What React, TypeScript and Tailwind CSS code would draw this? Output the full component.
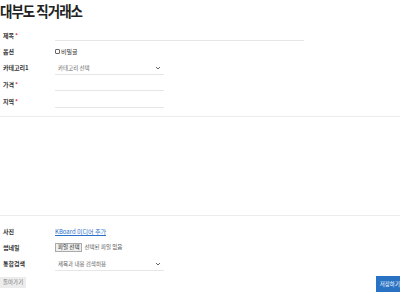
import React from 'react';

const font = { fontFamily: '"Noto Sans CJK KR", "Noto Sans", sans-serif' };

function Label({ text, required }: { text: string; required?: boolean }) {
  return (
    <div className="w-[55px] shrink-0 pl-[3px] text-[6px] font-semibold text-[#333]">
      {text}
      {required && <span className="ml-[1px] text-[#e53935]">*</span>}
    </div>
  );
}

function Chevron() {
  return (
    <svg width="6" height="4" viewBox="0 0 6 4" className="absolute right-[3px] top-[3px]">
      <path d="M1 1l2 2 2-2" fill="none" stroke="#555" strokeWidth="0.9" />
    </svg>
  );
}

export default function App() {
  return (
    <div className="relative h-[300px] w-[400px] overflow-hidden bg-white" style={font}>
      <h1 className="origin-left scale-y-[1.12] text-[13.5px] font-bold leading-[21px] tracking-[-1px] text-[#222]">
        대부도 직거래소
      </h1>

      {/* 기본 입력 */}
      <div className="mt-[6px] flex h-[16px] items-center">
        <Label text="제목" required />
        <div className="mt-[5px] h-[7px] w-[249px] border-b border-[#e6e6e6]" />
      </div>
      <div className="flex h-[16px] items-center">
        <Label text="옵션" />
        <label className="flex items-center gap-[1px] text-[6px] text-[#333]">
          <span className="inline-block h-[5px] w-[5px] rounded-[1px] border border-[#666]" />
          비밀글
        </label>
      </div>
      <div className="flex h-[17px] items-center">
        <Label text="카테고리1" />
        <div className="relative mt-[2px] h-[12px] w-[109px] border-b border-[#e6e6e6] pl-[3px] text-[5.5px] leading-[10px] text-[#666]">
          카테고리 선택
          <Chevron />
        </div>
      </div>
      <div className="flex h-[17px] items-center">
        <Label text="가격" required />
        <div className="mt-[6px] h-[7px] w-[109px] border-b border-[#e6e6e6]" />
      </div>
      <div className="flex h-[16px] items-center">
        <Label text="지역" required />
        <div className="mt-[6px] h-[7px] w-[109px] border-b border-[#e6e6e6]" />
      </div>

      {/* 에디터 */}
      <div className="mt-[7px] h-[100px] border-y border-[#ececec]" />

      {/* 첨부 */}
      <div className="mt-[7px] flex h-[16px] items-center">
        <Label text="사진" />
        <a className="text-[6px] text-[#2a6fc9] underline">KBoard 미디어 추가</a>
      </div>
      <div className="flex h-[16px] items-center">
        <Label text="썸네일" />
        <span className="border border-[#aaa] bg-[#efefef] px-[2px] text-[5.5px] leading-[7px] text-[#222]">파일 선택</span>
        <span className="ml-[2px] text-[5.5px] text-[#555]">선택된 파일 없음</span>
      </div>
      <div className="flex h-[17px] items-center">
        <Label text="통합검색" />
        <div className="relative mt-[2px] h-[12px] w-[109px] border-b border-[#e6e6e6] pl-[3px] text-[5.5px] leading-[10px] text-[#666]">
          제목과 내용 검색허용
          <Chevron />
        </div>
      </div>

      <div className="mt-[4px] flex items-start justify-between">
        <button className="mt-[1px] h-[11px] bg-[#ececec] px-[3px] text-[5.5px] leading-[11px] text-[#777]">돌아가기</button>
        <button className="mr-[-4px] h-[16px] bg-[#2a73c4] px-[4px] text-[5.5px] leading-[16px] text-white">저장하기</button>
      </div>
    </div>
  );
}
